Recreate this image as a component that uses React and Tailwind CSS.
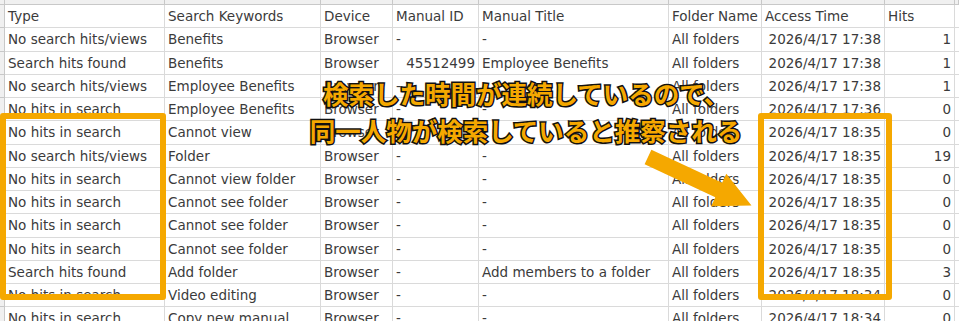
import React from "react";

const rows = [
  ["No search hits/views", "Benefits", "Browser", "-", "-", "All folders", "2026/4/17 17:38", "1"],
  ["Search hits found", "Benefits", "Browser", "45512499", "Employee Benefits", "All folders", "2026/4/17 17:38", "1"],
  ["No search hits/views", "Employee Benefits", "Browser", "-", "-", "All folders", "2026/4/17 17:38", "1"],
  ["No hits in search", "Employee Benefits", "Browser", "-", "-", "All folders", "2026/4/17 17:36", "0"],
  ["No hits in search", "Cannot view", "Browser", "-", "-", "All folders", "2026/4/17 18:35", "0"],
  ["No search hits/views", "Folder", "Browser", "-", "-", "All folders", "2026/4/17 18:35", "19"],
  ["No hits in search", "Cannot view folder", "Browser", "-", "-", "All folders", "2026/4/17 18:35", "0"],
  ["No hits in search", "Cannot see folder", "Browser", "-", "-", "All folders", "2026/4/17 18:35", "0"],
  ["No hits in search", "Cannot see folder", "Browser", "-", "-", "All folders", "2026/4/17 18:35", "0"],
  ["No hits in search", "Cannot see folder", "Browser", "-", "-", "All folders", "2026/4/17 18:35", "0"],
  ["Search hits found", "Add folder", "Browser", "-", "Add members to a folder", "All folders", "2026/4/17 18:35", "3"],
  ["No hits in search", "Video editing", "Browser", "-", "-", "All folders", "2026/4/17 18:34", "0"],
  ["No hits in search", "Copy new manual", "Browser", "-", "-", "All folders", "2026/4/17 18:34", "0"],
];

const header = ["Type", "Search Keywords", "Device", "Manual ID", "Manual Title", "Folder Name", "Access Time", "Hits"];

const cols = "grid grid-cols-[5px_160px_156px_72px_86px_190px_93px_123px_70px_1fr]";

function Cell({ children, right }) {
  const isNum = right && /^[0-9]/.test(children);
  return (
    <div
      className={`flex items-center overflow-hidden whitespace-nowrap border-r border-b border-[#dadada] px-[3px] ${
        isNum ? "justify-end" : "justify-start"
      }`}
    >
      {children}
    </div>
  );
}

function Row({ cells, header }) {
  return (
    <div className={`${cols} h-[23.25px]`}>
      <div className="border-r border-b border-[#c8c8c8] bg-[#f0f0f0]" />
      {cells.map((c, i) => (
        <Cell key={i} right={!header && (i === 3 || i === 6 || i === 7)}>
          {c}
        </Cell>
      ))}
      <div className="border-b border-[#dadada]" />
    </div>
  );
}

export default function App() {
  return (
    <div className="relative h-[321px] w-[959px] overflow-hidden bg-white font-['DejaVu_Sans','Liberation_Sans',sans-serif] text-[13.5px] text-[#3b3b3b]">
      <div className={`${cols} h-[5px] bg-[#f0f0f0]`}>
        {Array.from({ length: 10 }).map((_, i) => (
          <div key={i} className="border-r border-b border-[#c8c8c8]" />
        ))}
      </div>
      <Row cells={header} header />
      {rows.map((r, i) => (
        <Row key={i} cells={r} />
      ))}

      {/* annotation boxes */}
      <div className="absolute left-0 top-[113px] h-[187px] w-[166px] rounded-[3px] border-[6px] border-[#f5a800]" />
      <div className="absolute left-[758px] top-[113px] h-[187px] w-[134px] rounded-[3px] border-[6px] border-[#f5a800]" />

      {/* arrow */}
      <svg className="absolute left-0 top-0" width="959" height="321" viewBox="0 0 959 321">
        <polygon
          points="651.4,149.8 722.1,182.8 726.3,173.7 751.5,205.4 711.1,206.3 715.3,197.3 644.6,164.3"
          fill="#f5a800"
        />
      </svg>

      {/* caption */}
      <div className="absolute left-[296px] top-[74px] w-[460px] text-center font-['Noto_Sans_CJK_JP',sans-serif] text-[25.5px] font-bold leading-[37px] text-[#f5a800] [-webkit-text-stroke:3px_#111] [paint-order:stroke_fill]">
        <div>検索した時間が連続しているので、</div>
        <div>同一人物が検索していると推察される</div>
      </div>
    </div>
  );
}
